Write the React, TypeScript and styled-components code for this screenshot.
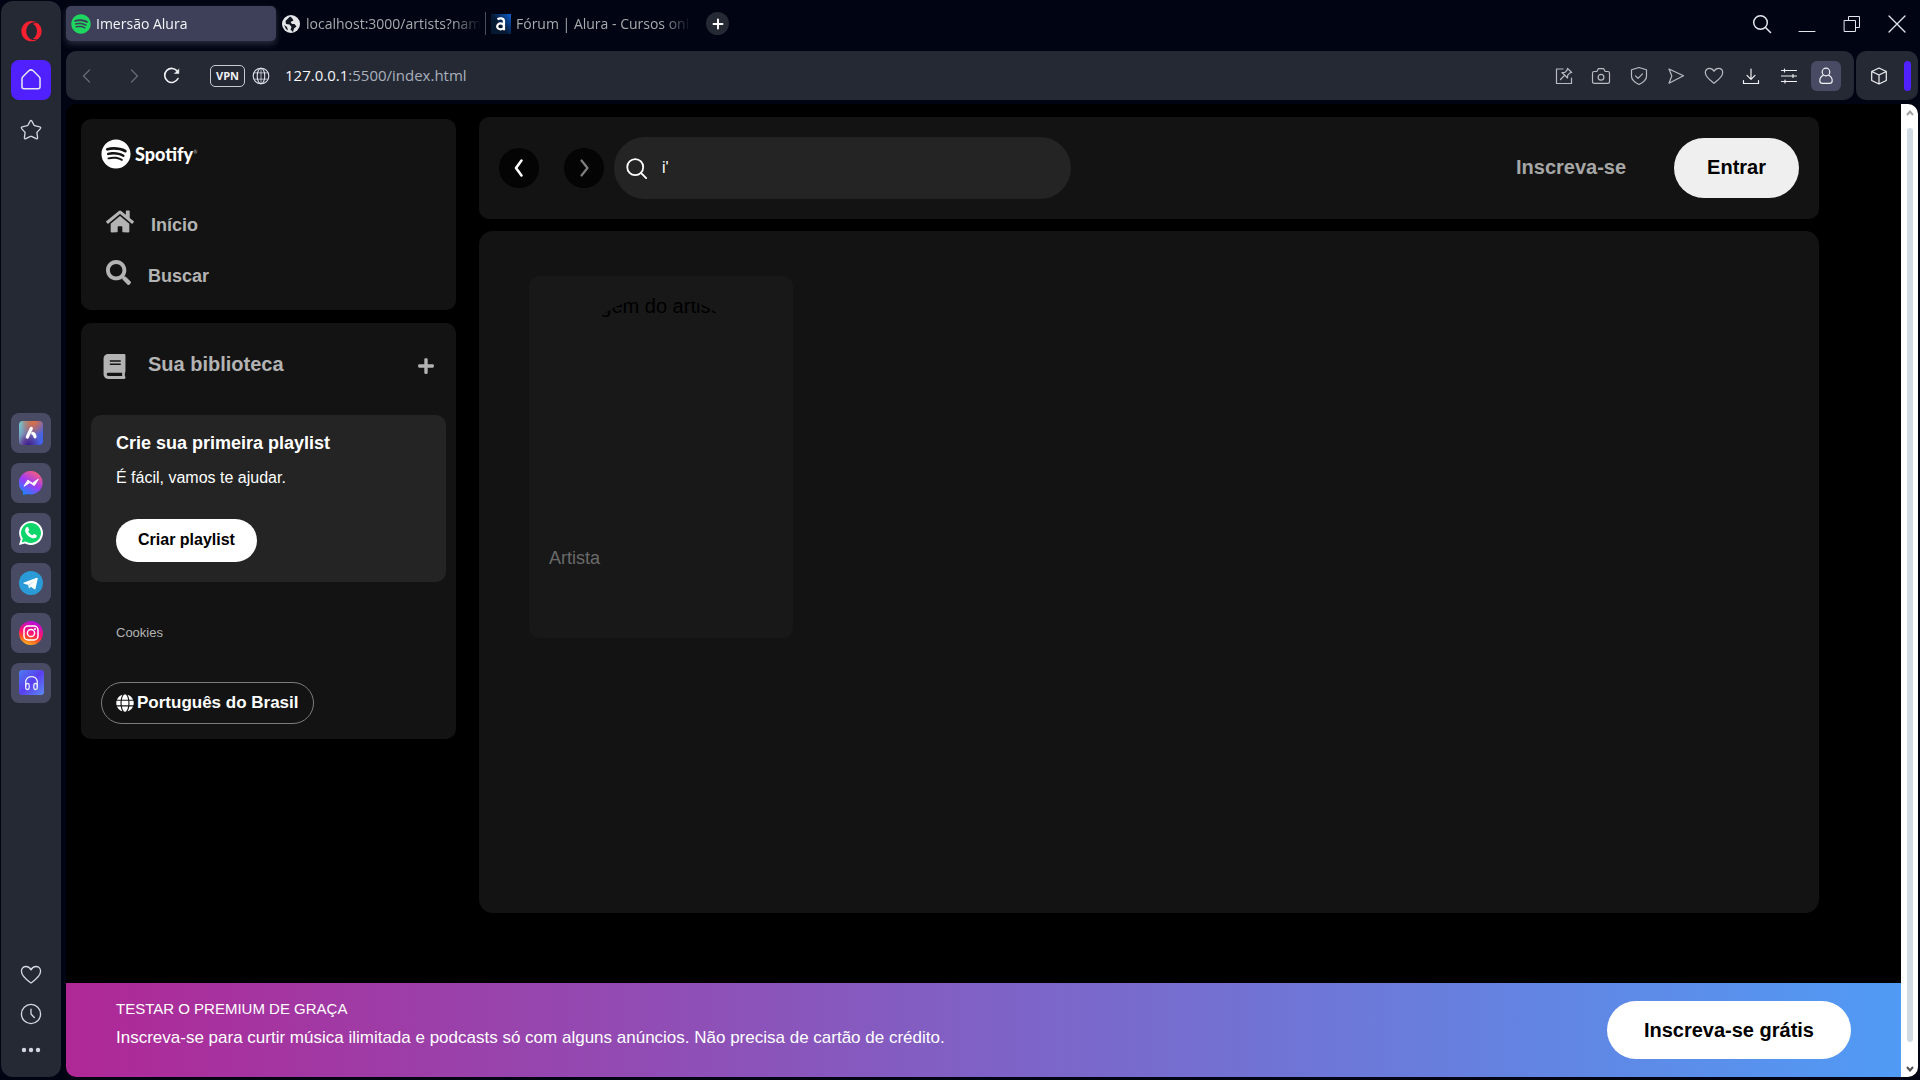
import React from "react";
import styled, { createGlobalStyle } from "styled-components";
import { FaBook, FaGlobe, FaHome, FaOpera, FaPlus, FaSearch, FaSpotify } from "react-icons/fa";

const uiFont = '"Open Sans", "Noto Sans", sans-serif';
const pageFont = '"Liberation Sans", Arial, sans-serif';

const GlobalStyle = createGlobalStyle`
  *, *::before, *::after { box-sizing: border-box; }
  body { margin: 0; background: #010513; }
  button { border: 0; padding: 0; background: none; font: inherit; color: inherit; cursor: pointer; }
  a { color: inherit; text-decoration: none; }
  h2, p, ul { margin: 0; padding: 0; }
  svg { display: block; flex: none; }
`;

/* ---------- browser frame ---------- */

const Window = styled.div`
  display: flex;
  gap: 5px;
  height: 100vh;
  padding: 0 2px 3px 1px;
  overflow: hidden;
  background: #010513;
  font-family: ${uiFont};
  color: #e4e6ee;
`;

const Rail = styled.aside`
  display: flex;
  flex: none;
  flex-direction: column;
  align-items: center;
  justify-content: space-between;
  width: 60px;
  margin-top: 1px;
  padding: 20px 0 15px;
  border-radius: 12px;
  background: #252934;
`;

const RailGroup = styled.div<{ $gap: number }>`
  display: flex;
  flex-direction: column;
  align-items: center;
  gap: ${(p) => p.$gap}px;
`;

const AppGroup = styled(RailGroup)`
  margin-top: 12px;
`;

const RailButton = styled.button<{ $tone?: string }>`
  display: grid;
  place-items: center;
  width: 40px;
  height: 40px;
  border-radius: 8px;
  background: ${(p) => p.$tone ?? "transparent"};
`;

const RailIcon = styled.button`
  display: grid;
  place-items: center;
  width: 40px;
  height: 20px;
  color: #d4d7df;
`;

const Chrome = styled.div`
  display: flex;
  flex: 1;
  flex-direction: column;
  min-width: 0;
`;

const TabBar = styled.div`
  display: flex;
  flex: none;
  align-items: flex-start;
  justify-content: space-between;
  height: 51px;
  padding: 6px 9px 0 0;
`;

const TabList = styled.div`
  display: flex;
  align-items: center;
`;

const Tab = styled.button<{ $active?: boolean; $divider?: boolean }>`
  position: relative;
  display: flex;
  align-items: center;
  gap: 5px;
  width: 210px;
  height: 35px;
  padding: 0 5px;
  border-radius: 5px;
  background: ${(p) => (p.$active ? "#3d4058" : "transparent")};
  box-shadow: ${(p) => (p.$active ? "0 3px 6px #2b2e3e" : "none")};
  color: ${(p) => (p.$active ? "#f4f5f8" : "#a9aaac")};
  font-size: 14px;
  line-height: 20px;
  text-align: left;

  &::after {
    content: "";
    position: absolute;
    right: 0;
    width: 1px;
    height: 23px;
    background: ${(p) => (p.$divider ? "#4b4e58" : "transparent")};
  }
`;

const TabIcon = styled.span`
  display: grid;
  flex: none;
  place-items: center;
  width: 20px;
  height: 20px;
`;

const TabLabel = styled.span`
  flex: 1;
  overflow: hidden;
  white-space: nowrap;
  mask-image: linear-gradient(90deg, #000 calc(100% - 28px), transparent);
`;

const NewTab = styled.button`
  display: grid;
  place-items: center;
  width: 23px;
  height: 23px;
  margin-left: 10px;
  border-radius: 50%;
  background: #252934;
  color: #fff;
`;

const WindowControls = styled.div`
  display: flex;
  align-items: center;
  gap: 21px;
  height: 35px;
`;

const ControlButton = styled.button`
  display: grid;
  place-items: center;
  width: 24px;
  height: 24px;
`;

const BarRow = styled.div`
  display: flex;
  flex: none;
  gap: 2px;
  height: 49px;
`;

const Toolbar = styled.div`
  display: flex;
  flex: 1;
  align-items: center;
  justify-content: space-between;
  min-width: 0;
  padding: 0 13px 0 6px;
  border-radius: 10px;
  background: #252934;
`;

const SideToolbar = styled(Toolbar)`
  flex: none;
  width: 62px;
  padding: 0 7px 0 8px;
`;

const NavGroup = styled.div`
  display: flex;
  align-items: center;
`;

const HistoryButtons = styled.div`
  display: flex;
  gap: 17px;
  margin-right: 8px;
`;

const NavButton = styled.button<{ $muted?: boolean }>`
  display: grid;
  place-items: center;
  width: 30px;
  height: 30px;
  color: ${(p) => (p.$muted ? "#6a6d77" : "#f0f1f4")};
`;

const Vpn = styled.button`
  height: 22px;
  width: 35px;
  margin: 0 7px 0 23px;
  border: 1px solid #c9cbd1;
  border-radius: 5px;
  color: #f0f1f4;
  font-size: 11px;
  font-weight: 700;
  line-height: 20px;
`;

const Address = styled.button`
  margin-left: 15px;
  padding-bottom: 2px;
  color: #a9b0bd;
  font-size: 15px;
  line-height: 24px;

  b {
    color: #f4f5f8;
    font-weight: 400;
  }
`;

const ToolIcons = styled.div`
  display: flex;
  justify-content: space-between;
  width: 292px;
`;

const ToolButton = styled.button<{ $selected?: boolean; $bright?: boolean }>`
  display: grid;
  place-items: center;
  width: 30px;
  height: 30px;
  border-radius: 6px;
  background: ${(p) => (p.$selected ? "#484b63" : "transparent")};
  color: ${(p) => (p.$bright ? "#f0f1f4" : "#b9bbc1")};
`;

const Accent = styled.span`
  width: 7px;
  height: 30px;
  border-radius: 4px;
  background: #5020ff;
`;

const Viewport = styled.div`
  display: flex;
  flex: 1;
  min-height: 0;
  margin-top: 4px;
  border-radius: 10px;
  overflow: hidden;
  background: #000;
`;

const ScrollBar = styled.div`
  display: flex;
  flex: none;
  flex-direction: column;
  align-items: center;
  justify-content: space-between;
  width: 17px;
  padding: 6px 0 5px;
  background: #fff;
`;

const ScrollThumb = styled.span`
  flex: 1;
  width: 6px;
  margin: 12px 0 24px;
  border-radius: 3px;
  background: #d0dbe3;
`;

/* ---------- web page ---------- */

const Page = styled.div`
  display: flex;
  flex: 1;
  flex-direction: column;
  min-width: 0;
  background: #000;
  font-family: ${pageFont};
`;

const Columns = styled.div`
  display: flex;
  flex: 1;
  gap: 23px;
  min-height: 0;
  padding: 13px 82px 70px 15px;
`;

const Sidebar = styled.nav`
  display: flex;
  flex: none;
  flex-direction: column;
  gap: 13px;
  width: 375px;
  padding-top: 2px;
`;

const Panel = styled.section`
  border-radius: 10px;
  background: #131313;
`;

const MenuPanel = styled(Panel)`
  padding: 20px 20px 8px;
`;

const Brand = styled.a`
  display: flex;
  align-items: center;
  gap: 4px;
  height: 30px;
  margin-bottom: 31px;
  color: #fff;
  font-family: Lato, sans-serif;
  font-size: 18px;
  font-weight: 900;
  line-height: 20px;

  sup {
    color: #888;
    font-size: 5px;
    line-height: 5px;
  }
`;

const Menu = styled.ul`
  list-style: none;
`;

const MenuLink = styled.a`
  display: flex;
  align-items: center;
  gap: 17px;
  height: 51px;
  padding-left: 5px;
  color: #b3b3b3;
  font-size: 18px;
  font-weight: 700;
`;

const MenuIcon = styled.span`
  padding-bottom: 9px;
`;

const HomeIcon = styled(FaHome)`
  width: 28px;
  height: 25px;
`;

const LibraryPanel = styled(Panel)`
  padding-bottom: 15px;
`;

const LibraryHead = styled.div`
  display: flex;
  align-items: center;
  gap: 21px;
  padding: 29px 21px 35px;
  color: #b3b3b3;
`;

const LibraryTitle = styled.h2`
  flex: 1;
  padding-bottom: 4px;
  font-size: 20px;
  line-height: 24px;
`;

const PlaylistBox = styled.div`
  margin: 0 10px;
  padding: 16px 25px 20px;
  border-radius: 10px;
  background: #242424;
  color: #fff;

  h2 {
    margin-bottom: 11px;
    font-size: 18px;
    line-height: 24px;
  }

  p {
    margin-bottom: 29px;
    font-size: 16px;
    line-height: 24px;
  }
`;

const Pill = styled.button<{ $size: number; $pad: string; $tone?: string }>`
  padding: ${(p) => p.$pad};
  border-radius: 32px;
  background: ${(p) => p.$tone ?? "#fff"};
  color: #000;
  font-size: ${(p) => p.$size}px;
  font-weight: 700;
  line-height: 20px;
  white-space: nowrap;
`;

const CookieLink = styled.a`
  display: block;
  margin: 43px 35px 41px;
  color: #b3b3b3;
  font-size: 13px;
  line-height: 16px;
`;

const LanguageButton = styled.button`
  display: flex;
  align-items: center;
  gap: 3px;
  height: 42px;
  margin-left: 20px;
  padding: 0 14px;
  border: 1px solid #7c7c7c;
  border-radius: 21px;
  color: #fff;
  font-size: 17px;
  font-weight: 700;
`;

const Main = styled.main`
  display: flex;
  flex: 1;
  flex-direction: column;
  gap: 12px;
  min-width: 0;
`;

const TopBar = styled.header`
  display: flex;
  align-items: center;
  padding: 20px;
  border-radius: 10px;
  background: #131313;
`;

const Arrows = styled.div`
  display: flex;
  gap: 25px;
  margin-right: 10px;
`;

const ArrowButton = styled.button<{ $muted?: boolean }>`
  display: grid;
  place-items: center;
  width: 40px;
  height: 40px;
  border-radius: 50%;
  background: #040404;
  color: ${(p) => (p.$muted ? "#7f7f7f" : "#fff")};
`;

const SearchBox = styled.label`
  display: flex;
  flex: 0 1 457px;
  align-items: center;
  gap: 15px;
  height: 62px;
  padding: 0 12px;
  border-radius: 31px;
  background: #242424;
  color: #fff;

  input {
    flex: 1;
    min-width: 0;
    padding: 0;
    border: 0;
    outline: 0;
    background: none;
    color: #fff;
    font-family: ${pageFont};
    font-size: 16px;
    line-height: 20px;
  }
`;

const Session = styled.div`
  display: flex;
  align-items: center;
  gap: 48px;
  margin-left: auto;
`;

const SignUp = styled.button`
  padding-bottom: 2px;
  color: #a7a7a7;
  font-size: 20px;
  font-weight: 700;
  line-height: 24px;
`;

const Results = styled.section`
  flex: 1;
  min-height: 0;
  padding: 45px 50px;
  border-radius: 14px;
  background: #131313;
`;

const ArtistCard = styled.article`
  width: 264px;
  padding: 20px 20px 68px;
  border-radius: 10px;
  background: #181818;
`;

const Portrait = styled.div`
  width: 200px;
  height: 200px;
  margin: 0 auto 50px;
  overflow: hidden;
  border-radius: 50%;
  color: #000;
  font-size: 20px;
  line-height: 20px;
  text-indent: 6px;
  white-space: nowrap;
`;

const ArtistRole = styled.p`
  color: #6a6a6a;
  font-size: 18px;
  line-height: 24px;
`;

const Promo = styled.footer`
  display: flex;
  flex: none;
  align-items: flex-start;
  justify-content: space-between;
  padding: 18px 50px;
  background: linear-gradient(90deg, #af2896, #509bf5);
  color: #fff;
`;

const PromoTitle = styled.p`
  margin-bottom: 9px;
  font-size: 15px;
  line-height: 16px;
`;

const PromoText = styled.p`
  font-size: 17px;
  line-height: 24px;
`;

/* ---------- drawings ---------- */

type GlyphProps = { size?: number; stroke?: number; children: React.ReactNode };

const Glyph = ({ size = 20, stroke = 1.2, children }: GlyphProps) => (
  <svg width={size} height={size} viewBox="0 0 20 20" fill="none" stroke="currentColor"
    strokeWidth={stroke} strokeLinecap="round" strokeLinejoin="round" aria-hidden="true">
    {children}
  </svg>
);

const heart = <path d="M10 17.3C7.2 15.2 1.3 11.2 1.3 6.6 1.3 4 3.2 2.3 5.5 2.3c1.900 0 3.500 1.100 4.500 3 1-1.900 2.600-3 4.500-3 2.300 0 4.200 1.700 4.200 4.300 0 4.600-5.900 8.600-8.700 10.700z" />;

const apps = [
  {
    name: "Aria",
    art: (
      <svg width="24" height="24" viewBox="0 0 24 24">
        <defs>
          <linearGradient id="ariaBase" x1="0" y1="0.3" x2="1" y2="0.7">
            <stop offset="0" stopColor="#6fc3cf" /><stop offset="0.4" stopColor="#8068a0" /><stop offset="1" stopColor="#3f62ee" />
          </linearGradient>
          <radialGradient id="ariaWarm" cx="0.6" cy="0" r="0.6">
            <stop offset="0" stopColor="#e0713f" /><stop offset="1" stopColor="#e0713f" stopOpacity="0" />
          </radialGradient>
          <radialGradient id="ariaDeep" cx="0.4" cy="1" r="0.5">
            <stop offset="0" stopColor="#3c1c8c" /><stop offset="1" stopColor="#3c1c8c" stopOpacity="0" />
          </radialGradient>
        </defs>
        <rect width="24" height="24" rx="4" fill="url(#ariaBase)" />
        <rect width="24" height="24" rx="4" fill="url(#ariaWarm)" />
        <rect width="24" height="24" rx="4" fill="url(#ariaDeep)" />
        <path d="M12.300 7.500L8.300 16M13.800 12.500c1.300.4 2 1.700 2.200 3.300" stroke="#fff" strokeWidth="3.200" strokeLinecap="round" fill="none" />
      </svg>
    ),
  },
  {
    name: "Messenger",
    art: (
      <svg width="24" height="24" viewBox="0 0 24 24">
        <defs>
          <linearGradient id="messenger" x1="0.2" y1="1" x2="0.8" y2="0">
            <stop offset="0" stopColor="#1388ff" /><stop offset="0.5" stopColor="#a03bf5" /><stop offset="1" stopColor="#ff6171" />
          </linearGradient>
        </defs>
        <path d="M12 0a12 11.700 0 1 1-3.500 23L4 24v-3.300A11.700 11.700 0 0 1 12 0z" fill="url(#messenger)" />
        <path d="M5 15.200l3.800-6 4.600 3 5.800-3.900-3.900 6.300-4.500-3z" fill="#fff" stroke="#fff" strokeLinejoin="round" />
      </svg>
    ),
  },
  {
    name: "WhatsApp",
    art: (
      <svg width="24" height="24" viewBox="0 0 24 24">
        <path d="M12 0a12 12 0 1 1-6 22.400L0 24l1.700-6A12 12 0 0 1 12 0z" fill="#fff" />
        <path d="M12 2a10 10 0 1 1-5.300 18.500L2.800 21.300l1-3.700A10 10 0 0 1 12 2z" fill="#0fd66b" />
        <path d="M7.700 6.300c.4-.4 1.200-.5 1.500.1l1 2.300c.2.6-.7 1.300-1 1.700.8 1.700 2.300 3 4.200 3.900.5-.3 1.100-1.500 1.700-1.300l2.500 1.200c.5.3.2 1.500-.3 2.100-1 1.200-2.800 1.400-5 .5-2.900-1.200-5-3.500-6-6.100-.5-1.900.2-3.500 1.400-4.400z" fill="#fff" />
      </svg>
    ),
  },
  {
    name: "Telegram",
    art: (
      <svg width="24" height="24" viewBox="0 0 24 24">
        <circle cx="12" cy="12" r="12" fill="#2a9bd7" />
        <path d="M4.500 11.800L17.800 6.700c.6-.2 1 .1.900.8l-2.200 10.200c-.2.700-.6.900-1.200.6l-3.400-2.500-1.900 1.700-.7-3.600-4.800-1.400z" fill="#fff" />
        <path d="M9.300 13.900l6.300-4.400-5.200 5-.4 3z" fill="#b9d9ec" />
      </svg>
    ),
  },
  {
    name: "Instagram",
    art: (
      <svg width="24" height="24" viewBox="0 0 24 24">
        <defs>
          <linearGradient id="instagram" x1="0.600" y1="0" x2="0.300" y2="1">
            <stop offset="0" stopColor="#b010e0" /><stop offset="0.500" stopColor="#ff1370" /><stop offset="0.750" stopColor="#ff5a20" /><stop offset="1" stopColor="#ffc020" />
          </linearGradient>
        </defs>
        <circle cx="12" cy="12" r="12" fill="url(#instagram)" />
        <g fill="none" stroke="#fff" strokeWidth="1.500">
          <rect x="5" y="5" width="14" height="14" rx="4" />
          <circle cx="12" cy="12" r="3.600" />
        </g>
        <circle cx="16" cy="8" r="1" fill="#fff" />
      </svg>
    ),
  },
  {
    name: "Player",
    art: (
      <svg width="25" height="25" viewBox="0 0 25 25">
        <defs>
          <linearGradient id="player" x1="0" y1="0" x2="1" y2="1">
            <stop offset="0" stopColor="#4d7cf0" /><stop offset="0.500" stopColor="#5a3ff0" /><stop offset="1" stopColor="#5b8cf5" />
          </linearGradient>
        </defs>
        <rect width="25" height="25" rx="3" fill="url(#player)" />
        <g fill="none" stroke="#e6e9ff" strokeWidth="1.300">
          <path d="M6.700 17V11a6 6 0 0 1 11.600 0v6" />
          <rect x="6.700" y="13.500" width="3.500" height="6" rx="1.700" />
          <rect x="14.800" y="13.500" width="3.500" height="6" rx="1.700" />
        </g>
      </svg>
    ),
  },
];

const tools = [
  { name: "Editar", bright: false, art: <><path d="M9 3H2.500v14.500h15V12" /><path d="M13.500 2.300l4.200 4.200-1.700.3-2.300 2.300-.2 2.900-5.500-5.500 2.900-.2 2.300-2.300zM10.300 9.700L6.500 13.500" /></> },
  { name: "Captura", bright: false, art: <><path d="M3.200 5.500h2.600l1.500-2.800h5.400l1.500 2.800h2.600c1 0 1.700.7 1.700 1.700v8.500c0 1-.7 1.700-1.700 1.700H3.200c-1 0-1.700-.7-1.700-1.700V7.200c0-1 .7-1.700 1.700-1.700z" /><circle cx="10" cy="11.300" r="2.900" /></> },
  { name: "Proteção", bright: false, art: <><path d="M10 1.500l7.500 2.300v6.400c0 4-3.500 6.300-7.500 8.300-4-2-7.500-4.300-7.500-8.300V3.800z" /><path d="M6.500 9.800l2.500 2.500 4.500-4.500" /></> },
  { name: "Enviar", bright: false, art: <path d="M3 3l14.500 6.800L3 17.200l2.800-7.200z" /> },
  { name: "Favoritos", bright: false, art: heart },
  { name: "Downloads", bright: true, art: <path d="M10 3v10M6 9.300l4 4 4-4M2.500 14.500v3h15v-3" /> },
  { name: "Configuração fácil", bright: true, art: <path d="M2.500 4.500h15M2.500 10h15M2.500 15.500h15M5.500 3v3M14 8.500v3M6 14v3" /> },
];

export default function App() {
  return (
    <Window>
      <GlobalStyle />
      <Rail>
        <RailGroup $gap={19}>
          <RailIcon aria-label="Opera">
            <FaOpera size={21} color="#f9202f" />
          </RailIcon>
          <RailButton $tone="#5020ff" aria-label="Início rápido">
            <Glyph size={22} stroke={1.400}><path d="M1.800 8.800c0-.7.3-1.300.8-1.800L8 1.600c1.200-1 2.800-1 4 0L17.400 7c.5.500.8 1.100.8 1.800v7.400c0 1-.8 1.800-1.800 1.800H3.600c-1 0-1.800-.8-1.800-1.800z" /></Glyph>
          </RailButton>
          <RailIcon aria-label="Destaques">
            <Glyph size={22}><path d="M10 1.300c.4 0 .6.300.8.600l2 3.800c.1.200.3.400.5.400l4.700 1c.9.200 1 1 .5 1.600l-2.900 3.200c-.2.200-.2.400-.2.700l.6 4.400c.1.800-.6 1.200-1.300.9l-4.200-2.100c-.3-.1-.7-.1-1 0l-4.200 2.100c-.7.300-1.400-.1-1.300-.9l.6-4.400c0-.3 0-.5-.2-.7L1.500 8.700c-.5-.6-.4-1.400.5-1.600l4.700-1c.2 0 .4-.2.5-.4l2-3.800c.2-.3.4-.6.8-.6z" /></Glyph>
          </RailIcon>
        </RailGroup>
        <AppGroup $gap={10}>
          {apps.map((app) => (
            <RailButton key={app.name} $tone="#484b63" aria-label={app.name}>{app.art}</RailButton>
          ))}
        </AppGroup>
        <RailGroup $gap={19}>
          <RailIcon aria-label="Curtidas"><Glyph size={22}>{heart}</Glyph></RailIcon>
          <RailIcon aria-label="Histórico">
            <Glyph size={22}><circle cx="10" cy="10" r="8.700" /><path d="M10 5.500V10l3 3.200" /></Glyph>
          </RailIcon>
          <RailIcon aria-label="Mais">
            <Glyph size={20} stroke={0}><g fill="currentColor"><circle cx="3" cy="8" r="2.200" /><circle cx="10" cy="8" r="2.200" /><circle cx="17" cy="8" r="2.200" /></g></Glyph>
          </RailIcon>
        </RailGroup>
      </Rail>

      <Chrome>
        <TabBar>
          <TabList>
            <Tab $active>
              <TabIcon><FaSpotify size={20} color="#1ed760" /></TabIcon>
              <TabLabel>Imersão Alura</TabLabel>
            </Tab>
            <Tab $divider>
              <TabIcon>
                <svg width="18" height="18" viewBox="0 0 18 18">
                  <circle cx="9" cy="9" r="9" fill="#e4e6ea" />
                  <path d="M8 1.500L3.500 6l.5 3 3.500.5L9.500 12l-1 2.500L11 17l1-3.500 2.500-2L12.500 9H10L8.500 7l3-1.500L10 3zM2 10l2 4 2 1.500L5 12z" fill="#10141f" />
                </svg>
              </TabIcon>
              <TabLabel>localhost:3000/artists?nam</TabLabel>
            </Tab>
            <Tab>
              <TabIcon>
                <svg width="20" height="20" viewBox="0 0 20 20">
                  <defs>
                    <linearGradient id="alura" x1="0.400" y1="0.500" x2="1" y2="0">
                      <stop offset="0" stopColor="#051933" /><stop offset="1" stopColor="#0d5fd0" />
                    </linearGradient>
                  </defs>
                  <rect width="20" height="20" fill="url(#alura)" />
                  <path d="M6.500 5.300C8.500 3.900 13 3.700 13 7.500v8.800" stroke="#fff" strokeWidth="2.200" fill="none" />
                  <ellipse cx="9.600" cy="12.400" rx="3.400" ry="3" stroke="#fff" strokeWidth="2.200" fill="none" />
                </svg>
              </TabIcon>
              <TabLabel>Fórum | Alura - Cursos onli</TabLabel>
            </Tab>
            <NewTab aria-label="Nova aba"><Glyph size={12} stroke={3.200}><path d="M10 2.500v15M2.500 10h15" /></Glyph></NewTab>
          </TabList>
          <WindowControls>
            <ControlButton aria-label="Pesquisar abas"><Glyph stroke={1.500}><circle cx="8.500" cy="8.500" r="6.800" /><path d="M13.500 13.500l5 5" /></Glyph></ControlButton>
            <ControlButton aria-label="Minimizar"><Glyph stroke={1}><path d="M2 17.500h16" /></Glyph></ControlButton>
            <ControlButton aria-label="Restaurar"><Glyph stroke={1}><path d="M2.500 6.500h11v11h-11zM6.500 6.500v-4h11v11h-4" /></Glyph></ControlButton>
            <ControlButton aria-label="Fechar"><Glyph stroke={1.300}><path d="M2 2l16 16M18 2L2 18" /></Glyph></ControlButton>
          </WindowControls>
        </TabBar>

        <BarRow>
          <Toolbar>
            <NavGroup>
              <HistoryButtons>
                <NavButton $muted aria-label="Voltar"><Glyph><path d="M12.500 4l-6 6 6 6" /></Glyph></NavButton>
                <NavButton $muted aria-label="Avançar"><Glyph><path d="M7.500 4l6 6-6 6" /></Glyph></NavButton>
              </HistoryButtons>
              <NavButton aria-label="Recarregar"><Glyph stroke={1.600}><path d="M16 12.500A7 7 0 1 1 15.500 5.500" /><path d="M16.900 3.200v4.300h-4.300z" fill="currentColor" strokeWidth="0.5" /></Glyph></NavButton>
              <Vpn>VPN</Vpn>
              <Glyph size={18}><circle cx="10" cy="10" r="8.700" /><ellipse cx="10" cy="10" rx="4.200" ry="8.700" /><path d="M2.500 6.500h15M2.500 13.500h15M10 1.300v17.400" strokeWidth="0.800" /></Glyph>
              <Address><b>127.0.0.1</b>:5500/index.html</Address>
            </NavGroup>
            <ToolIcons>
              {tools.map((tool) => (
                <ToolButton key={tool.name} $bright={tool.bright} aria-label={tool.name}><Glyph>{tool.art}</Glyph></ToolButton>
              ))}
              <ToolButton $selected $bright aria-label="Perfil">
                <Glyph><circle cx="10" cy="6" r="3.800" /><path d="M7.300 9.300C5 10.500 3.800 12.500 3.800 14.700c0 1.700 1 2.600 2.700 2.600h7c1.700 0 2.700-.9 2.700-2.600 0-2.200-1.200-4.200-3.500-5.400" /></Glyph>
              </ToolButton>
            </ToolIcons>
          </Toolbar>
          <SideToolbar>
            <ToolButton $bright aria-label="Extensões">
              <Glyph><path d="M10 2l7.300 3.500v9L10 18l-7.300-3.500v-9zM2.700 5.500L10 9l7.300-3.500M10 9v9" /></Glyph>
            </ToolButton>
            <Accent />
          </SideToolbar>
        </BarRow>

        <Viewport>
          <Page>
            <Columns>
              <Sidebar>
                <MenuPanel>
                  <Brand href="#">
                    <FaSpotify size={30} />
                    <span>Spotify<sup>®</sup></span>
                  </Brand>
                  <Menu>
                    <li><MenuLink href="#"><MenuIcon><HomeIcon /></MenuIcon>Início</MenuLink></li>
                    <li><MenuLink href="#"><MenuIcon><FaSearch size={25} /></MenuIcon>Buscar</MenuLink></li>
                  </Menu>
                </MenuPanel>
                <LibraryPanel>
                  <LibraryHead>
                    <FaBook size={25} />
                    <LibraryTitle>Sua biblioteca</LibraryTitle>
                    <button aria-label="Adicionar"><FaPlus size={18} /></button>
                  </LibraryHead>
                  <PlaylistBox>
                    <h2>Crie sua primeira playlist</h2>
                    <p>É fácil, vamos te ajudar.</p>
                    <Pill $size={16} $pad="11px 22px 12px">Criar playlist</Pill>
                  </PlaylistBox>
                  <CookieLink href="#">Cookies</CookieLink>
                  <LanguageButton><FaGlobe size={18} />Português do Brasil</LanguageButton>
                </LibraryPanel>
              </Sidebar>

              <Main>
                <TopBar>
                  <Arrows>
                    <ArrowButton aria-label="Anterior"><Glyph stroke={2.600}><path d="M12.500 2.500L7 10l5.500 7.500" /></Glyph></ArrowButton>
                    <ArrowButton $muted aria-label="Próximo"><Glyph stroke={2.200}><path d="M7.500 2.500L13.500 10l-6 7.500" /></Glyph></ArrowButton>
                  </Arrows>
                  <SearchBox>
                    <Glyph size={21} stroke={1.700}><circle cx="8.800" cy="8.700" r="7.600" /><path d="M14.200 14.200l5 5" /></Glyph>
                    <input type="text" defaultValue="i'" aria-label="O que você quer ouvir?" />
                  </SearchBox>
                  <Session>
                    <SignUp>Inscreva-se</SignUp>
                    <Pill $size={20} $pad="19px 33px 21px" $tone="#efefef">Entrar</Pill>
                  </Session>
                </TopBar>
                <Results>
                  <ArtistCard>
                    <Portrait>Imagem do artista</Portrait>
                    <ArtistRole>Artista</ArtistRole>
                  </ArtistCard>
                </Results>
              </Main>
            </Columns>
            <Promo>
              <div>
                <PromoTitle>TESTAR O PREMIUM DE GRAÇA</PromoTitle>
                <PromoText>Inscreva-se para curtir música ilimitada e podcasts só com alguns anúncios. Não precisa de cartão de crédito.</PromoText>
              </div>
              <Pill $size={20} $pad="19px 37px">Inscreva-se grátis</Pill>
            </Promo>
          </Page>
          <ScrollBar aria-hidden="true">
            <svg width="8" height="6" viewBox="0 0 8 6" fill="none" stroke="#a3a3a3" strokeWidth="2"><path d="M1 5l3-3.500L7 5" /></svg>
            <ScrollThumb />
            <svg width="8" height="6" viewBox="0 0 8 6" fill="none" stroke="#505050" strokeWidth="2"><path d="M1 1l3 3.500L7 1" /></svg>
          </ScrollBar>
        </Viewport>
      </Chrome>
    </Window>
  );
}
